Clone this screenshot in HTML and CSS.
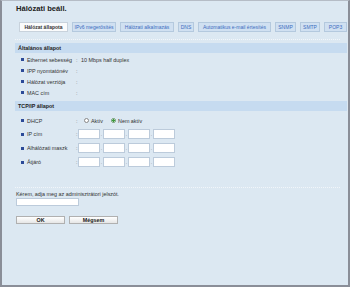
FILE: index.html
```html
<!DOCTYPE html>
<html lang="hu">
<head>
<meta charset="utf-8">
<link rel="stylesheet" href="styles.css">
</head>
<body>
<div class="frame">
  <h1 class="title">Hálózati beáll.</h1>
  <div class="tabs">
    <span class="tab active w49">Hálózat állapota</span>
    <span class="tab w44">IPv6 megerősítés</span>
    <span class="tab w54">Hálózati alkalmazás</span>
    <span class="tab w16">DNS</span>
    <span class="tab w73">Automatikus e-mail értesítés</span>
    <span class="tab w21">SNMP</span>
    <span class="tab w20">SMTP</span>
    <span class="tab w23">POP3</span>
  </div>
  <div class="dots top-dots"></div>
  <div class="section-head">Általános állapot</div>
  <div class="rows">
    <div class="row"><span class="bullet"></span><span class="label">Ethernet sebesség</span><span class="colon">:</span><span class="value">10 Mbps half duplex</span></div>
    <div class="row"><span class="bullet"></span><span class="label">IPP nyomtatónév</span><span class="colon">:</span><span class="value"></span></div>
    <div class="row"><span class="bullet"></span><span class="label">Hálózat verziója</span><span class="colon">:</span><span class="value"></span></div>
    <div class="row"><span class="bullet"></span><span class="label">MAC cím</span><span class="colon">:</span><span class="value"></span></div>
  </div>
  <div class="section-head">TCP/IP állapot</div>
  <div class="rows tcp">
    <div class="row dhcp"><span class="bullet"></span><span class="label">DHCP</span><span class="colon">:</span>
      <span class="radios"><span class="radio"></span><span>Aktív</span><span class="radio on"></span><span>Nem aktív</span></span></div>
    <div class="row ip"><span class="bullet"></span><span class="label">IP cím</span><span class="colon">:</span>
      <span class="octets"><span class="box"></span><span class="sep">.</span><span class="box"></span><span class="sep">.</span><span class="box"></span><span class="sep">.</span><span class="box"></span></span></div>
    <div class="row ip"><span class="bullet"></span><span class="label">Alhálózati maszk</span><span class="colon">:</span>
      <span class="octets"><span class="box"></span><span class="sep">.</span><span class="box"></span><span class="sep">.</span><span class="box"></span><span class="sep">.</span><span class="box"></span></span></div>
    <div class="row ip"><span class="bullet"></span><span class="label">Átjáró</span><span class="colon">:</span>
      <span class="octets"><span class="box"></span><span class="sep">.</span><span class="box"></span><span class="sep">.</span><span class="box"></span><span class="sep">.</span><span class="box"></span></span></div>
  </div>
  <div class="dots bottom-dots"></div>
  <div class="prompt">Kérem, adja meg az adminisztrátori jelszót.</div>
  <div class="pw"></div>
  <div class="buttons">
    <span class="btn">OK</span>
    <span class="btn">Mégsem</span>
  </div>
</div>
</body>
</html>
```
FILE: styles.css
```css
* { box-sizing: border-box; }
html, body { margin: 0; padding: 0; }
body {
  width: 350px;
  height: 287px;
  font-family: "Liberation Sans", Arial, sans-serif;
  font-size: 5.4px;
  color: #333;
  background: #dce8f2;
}
.frame {
  width: 350px;
  height: 287px;
  border: 2px solid #8a8e98;
  border-top: 1px solid #b5bcc6;
  background: #dce8f2;
  padding: 0 1px 0 13px;
  display: flex;
  flex-direction: column;
}
.title {
  margin: 3px 0 0 1px;
  font-size: 7.6px;
  font-weight: bold;
  color: #222;
  height: 9px;
  line-height: 9px;
}
.tabs {
  display: flex;
  gap: 4px;
  margin: 9px 0 0 4px;
  height: 10px;
}
.tab {
  display: flex;
  align-items: center;
  justify-content: center;
  height: 10px;
  border: 1px solid #b4c9de;
  background: #d0e0f1;
  color: #3b6cc0;
  font-size: 5px;
  white-space: nowrap;
  overflow: hidden;
}
.w49 { width: 49px; }
.w44 { width: 44px; }
.w54 { width: 54px; }
.w16 { width: 16px; }
.w73 { width: 73px; }
.w21 { width: 21px; }
.w20 { width: 20px; }
.w23 { width: 23px; }
.tab.active {
  background: #fafbfc;
  border-color: #c8d2dc;
  color: #333;
  font-weight: bold;
}
.dots {
  height: 1px;
  margin-right: 6px;
  background-image: linear-gradient(to right, #f2f6fa 50%, transparent 50%);
  background-size: 2px 1px;
}
.top-dots { margin-top: 7px; }
.section-head {
  margin-top: 3px;
  height: 10px;
  line-height: 10px;
  padding-left: 3px;
  background: #c6dbf0;
  font-weight: bold;
  color: #222;
  font-size: 5.4px;
}
.rows {
  display: flex;
  flex-direction: column;
  padding: 1px 0 0 0;
}
.row {
  display: flex;
  align-items: center;
  height: 11px;
}
.bullet {
  width: 3px;
  height: 3px;
  background: #2c4a98;
  margin: 0 3px 0 6px;
}
.label { width: 49px; color: #333; }
.colon { width: 5px; color: #666; }
.value { color: #333; }
.tcp { padding-top: 3px; }
.tcp .row.dhcp { height: 13px; }
.tcp .row.ip { height: 14px; }
.ip .colon { width: 2px; }
.radios { display: flex; align-items: center; gap: 2px; margin-left: 3px; }
.radio {
  width: 5px; height: 5px;
  border-radius: 50%;
  border: 1px solid #888;
  background: #fff;
}
.radio.on {
  margin-left: 6px;
  background: radial-gradient(circle, #3a9a3a 0 1px, #fff 1.2px);
  border-color: #6a9a6a;
}
.octets { display: flex; align-items: center; }
.box {
  width: 22px;
  height: 10px;
  background: #fff;
  border: 1px solid #bccbdb;
}
.sep { width: 3px; text-align: center; color: #888; font-size: 5px; }
.bottom-dots { margin-top: 18px; }
.prompt {
  margin: 3px 0 0 1px;
  height: 7px;
  line-height: 7px;
  color: #333;
}
.pw {
  margin: 0 0 0 1px;
  width: 63px;
  height: 8px;
  background: #fff;
  border: 1px solid #bccbdb;
}
.buttons {
  display: flex;
  gap: 4px;
  margin: 10px 0 0 1px;
}
.btn {
  width: 49px;
  height: 8px;
  display: flex;
  align-items: center;
  justify-content: center;
  background: linear-gradient(#ffffff, #e6e6e6);
  border: 1px solid #b0b0b0;
  font-weight: bold;
  color: #222;
  font-size: 5.4px;
}
```
